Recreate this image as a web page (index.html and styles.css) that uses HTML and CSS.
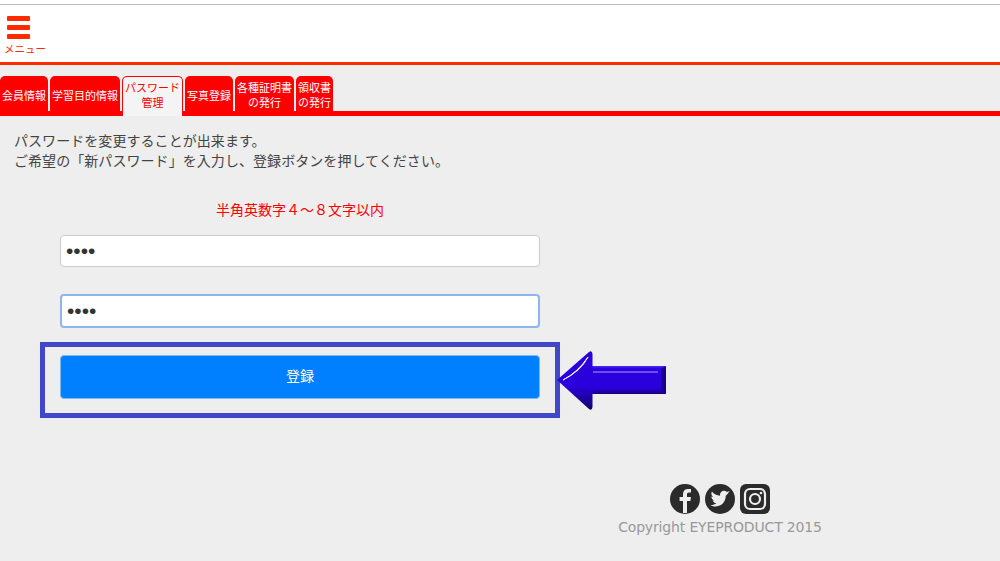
FILE: index.html
```html
<!DOCTYPE html>
<html lang="ja">
	<head>
		<meta charset="UTF-8" />
		<meta name="viewport" content="width=device-width, initial-scale=1.0" />
		<title>パスワード管理</title>
		<link rel="stylesheet" href="styles.css">
	</head>
	<body>
		<header class="topbar">
			<a class="menubtn" href="#">
				<span class="bars"><i></i><i></i><i></i></span>
				<span class="menulabel">メニュー</span>
			</a>
		</header>
		<nav class="tabs">
			<a class="tab w48" href="#">会員情報</a>
			<a class="tab w70" href="#">学習目的情報</a>
			<a class="tab w61 active" href="#">パスワード<br />管理</a>
			<a class="tab w48" href="#">写真登録</a>
			<a class="tab w59" href="#">各種証明書<br />の発行</a>
			<a class="tab w37" href="#">領収書<br />の発行</a>
		</nav>
		<main class="content">
			<p class="lead">パスワードを変更することが出来ます。<br />ご希望の「新パスワード」を入力し、登録ボタンを押してください。</p>
			<form class="pwform">
				<p class="hint">半角英数字４～８文字以内</p>
				<input class="field" type="password" value="abcd" />
				<input class="field focused" type="password" value="abcd" />
				<button class="submit" type="button">登録</button>
				<div class="callout"></div>
				<svg class="arrow" width="108" height="60" viewBox="0 0 108 60">
					<defs>
						<linearGradient id="shaft" x1="0" y1="0" x2="0" y2="1">
							<stop offset="0" stop-color="#4a2cf0" />
							<stop offset="0.1" stop-color="#2a00dc" />
							<stop offset="0.8" stop-color="#2a00dc" />
							<stop offset="1" stop-color="#170078" />
						</linearGradient>
						<linearGradient id="head" x1="0" y1="0" x2="0" y2="1">
							<stop offset="0" stop-color="#2a00dc" />
							<stop offset="0.6" stop-color="#2a00dc" />
							<stop offset="1" stop-color="#14006a" />
						</linearGradient>
					</defs>
					<path d="M34 15 H108 V43 H34 Z" fill="url(#shaft)" />
					<path d="M108 15 V43 L103 39 V18 Z" fill="#1a0090" />
					<path d="M-1 29 L31 1 Q34 -1 34.500 3 V56 Q34 60 31 58 Z" fill="url(#head)" />
					<path d="M5 29 Q20 21 30 6 Q23 20 5 29 Z" fill="#f4f0ff" stroke="#f4f0ff" stroke-width="1" />
					<path d="M35 21 H100" stroke="#7f6cf8" stroke-width="1.300" />
				</svg>
			</form>
			<footer class="foot">
				<div class="social">
					<svg width="30" height="30" viewBox="0 0 30 30">
						<circle cx="15" cy="15" r="15" fill="#2b2b2b" />
						<path d="M17 29 V17 H20.400 L20.900 13 H17 V10.500 C17 9.300 17.400 8.500 19 8.500 H21 V5 C20.600 5 19.400 4.900 18 4.900 C15 4.900 13 6.700 13 10 V13 H9.600 V17 H13 V29 Z" fill="#eee" />
					</svg>
					<svg width="30" height="30" viewBox="0 0 30 30">
						<circle cx="15" cy="15" r="15" fill="#2b2b2b" />
						<path d="M25 8.600 C24.200 9 23.500 9.200 22.700 9.300 C23.500 8.800 24.200 8 24.500 7 C23.700 7.500 22.800 7.800 21.900 8 C20.300 6.300 17.700 6.300 16.200 7.900 C15.200 8.900 14.800 10.300 15.100 11.700 C11.900 11.500 8.900 10 6.900 7.500 C5.800 9.300 6.400 11.700 8.100 12.900 C7.500 12.900 6.800 12.700 6.300 12.400 C6.300 14.300 7.600 16 9.500 16.400 C8.900 16.500 8.300 16.600 7.700 16.500 C8.200 18.100 9.700 19.200 11.400 19.200 C9.700 20.500 7.600 21.100 5.500 20.900 C10 23.800 16 22.600 18.900 18.100 C20.200 16.300 20.800 14 20.700 11.800 C21.500 11.100 22.300 10.300 22.900 9.400 Z" fill="#eee" />
					</svg>
					<svg width="30" height="30" viewBox="0 0 30 30">
						<rect width="30" height="30" rx="6" fill="#2b2b2b" />
						<rect x="5" y="5" width="20" height="20" rx="5" fill="none" stroke="#eee" stroke-width="2.200" />
						<circle cx="15" cy="15" r="5" fill="none" stroke="#eee" stroke-width="2.200" />
						<circle cx="21" cy="9" r="1.300" fill="#eee" />
					</svg>
				</div>
				<p class="copy">Copyright EYEPRODUCT 2015</p>
			</footer>
		</main>
	</body>
</html>
```

FILE: styles.css
```css
html,
body {
	margin: 0;
	height: 100%;
}
body {
	background-color: #eee;
	color: #444;
	font-family: "Noto Sans CJK JP", "Liberation Sans", sans-serif;
	overflow: hidden;
	border-top: 4px solid #fff;
}
a {
	text-decoration: none;
}
.topbar {
	display: flex;
	height: 57px;
	background-color: #fff;
	border-top: 1px solid #bbb;
	border-bottom: 3px solid #ff2b00;
	padding-left: 4px;
}
.menubtn {
	display: flex;
	flex-direction: column;
	color: #ff2b00;
}
.bars {
	display: flex;
	flex-direction: column;
	gap: 4px;
	margin: 11px 0 0 3px;
}
.bars i {
	display: block;
	width: 23px;
	height: 5px;
	border-radius: 1px;
	background-color: #ff2b00;
}
.menulabel {
	font-size: 10.5px;
	line-height: 14px;
	margin-top: 3px;
}
.tabs {
	display: flex;
	gap: 2px;
	height: 35px;
	margin-top: 11px;
	border-bottom: 5px solid #f00;
}
.tab {
	display: flex;
	align-items: center;
	justify-content: center;
	height: 35px;
	box-sizing: border-box;
	padding-top: 3px;
	background-color: #f00;
	color: #fff;
	border-radius: 5px 5px 0 0;
	font-size: 11px;
	line-height: 15px;
	text-align: center;
	white-space: nowrap;
}
.tab.active {
	height: 40px;
	padding: 2px 0 5px;
	background-color: #f4f4f4;
	color: #f00;
	border: 1px solid #f00;
	border-bottom: none;
}
.w37 { width: 37px; }
.w48 { width: 48px; }
.w59 { width: 59px; }
.w61 { width: 61px; }
.w70 { width: 70px; }
.content {
	padding: 14px 0 0 14px;
}
.lead {
	margin: 0;
	font-size: 14px;
	letter-spacing: 0.06px;
	line-height: 20px;
	color: #444;
}
.pwform {
	position: relative;
	display: flex;
	flex-direction: column;
	width: 480px;
	margin: 29px 0 0 46px;
}
.hint {
	margin: 0 0 16px;
	height: 20px;
	font-size: 14px;
	line-height: 20px;
	color: #f00;
	text-align: center;
}
.field {
	box-sizing: border-box;
	width: 100%;
	height: 32px;
	padding: 0 5px;
	margin-bottom: 27px;
	background-color: #fff;
	border: 1px solid #ccc;
	border-radius: 4px;
	font-size: 21px;
	color: #333;
	font-family: "Liberation Sans", sans-serif;
	outline: none;
}
.field.focused {
	height: 34px;
	border: 2px solid #8fb4ee;
}
.submit {
	height: 44px;
	padding: 0 0 4px;
	background-color: #0080ff;
	color: #fff;
	border: 1px solid #7db8f0;
	border-radius: 4px;
	font-size: 14px;
	font-family: "Noto Sans CJK JP", sans-serif;
}
.callout {
	position: absolute;
	left: -20px;
	bottom: -19px;
	width: 510px;
	height: 66px;
	border: 5px solid #4047c8;
}
.arrow {
	position: absolute;
	left: 498px;
	bottom: -12px;
	overflow: visible;
}
.foot {
	display: flex;
	flex-direction: column;
	align-items: center;
	width: 400px;
	margin: 85px 0 0 506px;
}
.social {
	display: flex;
	gap: 5px;
}
.copy {
	margin: 3px 0 0;
	font-family: "DejaVu Sans", sans-serif;
	font-size: 14px;
	letter-spacing: -0.16px;
	line-height: 20px;
	color: #999;
	white-space: nowrap;
}
```
